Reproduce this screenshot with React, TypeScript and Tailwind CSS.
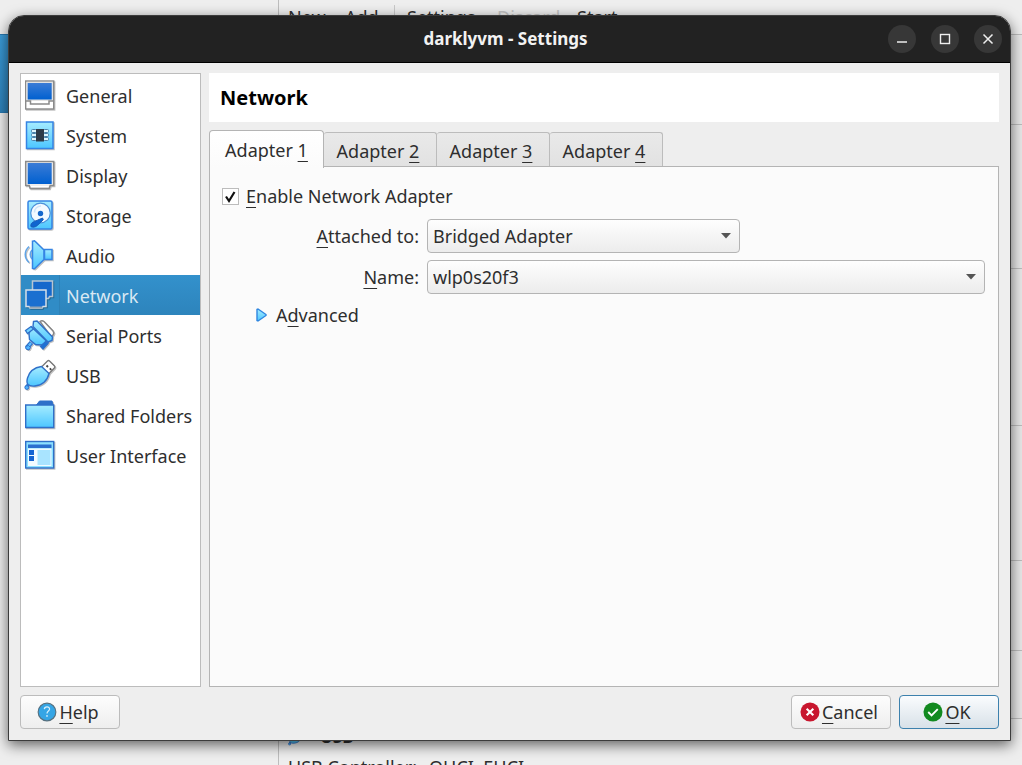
import { useState } from "react";
import type { ReactNode } from "react";

const OUT = "#2f70c9";

function Defs() {
  return (
    <svg width="0" height="0" className="absolute" aria-hidden="true">
      <defs>
        <linearGradient id="screen" x1="0" y1="0" x2="0" y2="1">
          <stop offset="0" stopColor="#3b7cd6" />
          <stop offset="1" stopColor="#0060d0" />
        </linearGradient>
        <linearGradient id="cyan" x1="0" y1="0" x2="0" y2="1">
          <stop offset="0" stopColor="#a6ecff" />
          <stop offset="1" stopColor="#4cc6ff" />
        </linearGradient>
      </defs>
    </svg>
  );
}

function Icon({ children }: { children: ReactNode }) {
  return (
    <svg
      width="32"
      height="32"
      viewBox="0 0 32 32"
      fill="none"
      className="shrink-0 drop-shadow-[1px_1px_0px_rgba(0,0,0,0.25)]"
      aria-hidden="true"
    >
      {children}
    </svg>
  );
}

const icons: Record<string, ReactNode> = {
  General: (
    <>
      <rect x="1.700" y="2" width="28" height="28" fill="#fff" stroke="#8a8a8a" strokeWidth="1.400" />
      <rect x="2.500" y="3" width="26.500" height="19" fill="#e2e2e2" />
      <rect x="3.700" y="4" width="24" height="16.500" fill="url(#screen)" />
      <path d="M2 22h4.500v3h18.500v-3h4.500" stroke="#8a8a8a" strokeWidth="1.500" />
    </>
  ),
  System: (
    <>
      <rect x="2.500" y="3" width="26.500" height="26.500" fill="url(#cyan)" stroke="#3584e4" strokeWidth="1.500" />
      {[10.5, 14.5, 18.5].map((y) => (
        <g key={y} fill="#dff6ff" stroke="#4b80a8" strokeWidth="1">
          <rect x="7.500" y={y} width="5" height="3" rx="1" />
          <rect x="19.500" y={y} width="5" height="3" rx="1" />
        </g>
      ))}
      <rect x="12" y="10" width="8" height="12.500" fill="#2e3a48" />
    </>
  ),
  Display: (
    <>
      <path d="M1.700 2.500h28v24h-3.500l-1 3H6.200l-1-3H1.700z" fill="#eee" stroke="#8a8a8a" strokeWidth="1.500" />
      <rect x="3.700" y="4" width="24" height="21" fill="url(#screen)" />
      <path d="M7 27.500h17.500" stroke="#fff" />
    </>
  ),
  Storage: (
    <>
      <rect x="4" y="2" width="24" height="28" rx="1.500" fill="url(#cyan)" stroke="#3584e4" strokeWidth="1.500" />
      <circle cx="16.500" cy="14" r="9.800" fill="#f4faff" stroke="#4a8fd8" strokeWidth="1.200" />
      <path d="M10.500 13.500c0-4 3-6.500 6.500-6.500" stroke="#cfe4f8" strokeWidth="1.500" />
      <circle cx="16.500" cy="14.500" r="2.700" fill="#1668cc" />
      <path d="M18.500 19l.8 1.800-6 5.700c-2 1.800-4.500 2-6.300 1.200-.7-2 .5-4.500 3.500-5.200z" fill="#0f66d0" stroke="#1a5cb8" />
    </>
  ),
  Audio: (
    <>
      <path d="M5 7.500C0 12 0 19 5 23.500M8 11Q4.500 15.500 8 20" stroke="#5fa4e8" strokeWidth="1.500" />
      <path d="M8.500 2.200l2-.4L20 11v9.500l-9.500 9.300-2-.4z" fill="url(#cyan)" stroke="#3584e4" strokeWidth="1.500" />
      <path d="M20.500 10.500H28v10h-7.500z" fill="url(#cyan)" stroke="#3584e4" strokeWidth="1.500" />
    </>
  ),
  Network: (
    <>
      <path d="M8.500 2h20v15.500h-3l-1 2h-12l-1-2h-3z" fill="#1668cc" stroke="#b7c5d3" strokeWidth="1.500" />
      <path d="M2 11h20v16.500h-3l-1 1.500H6l-1-1.500H2z" fill="#1a6fd0" stroke="#d6dfe8" strokeWidth="1.500" />
      <path d="M5.500 28.500h13" stroke="#93a4b4" strokeWidth="2" />
    </>
  ),
  "Serial Ports": (
    <>
      <path d="M16 2.500q2-1.500 4 0l9 9.500q1.500 2 0 4l-2 1.500z" fill="#fff" stroke="#858585" strokeWidth="1.400" />
      <path d="M7.500 23.500l-4.500 5" stroke={OUT} strokeWidth="4.500" />
      <path d="M7 24l-3 3.500" stroke="#5cc0ff" strokeWidth="2" />
      <path d="M1.500 27.500l3-1 2 2-1.500 2.500-3-1z" fill="#4fb4ff" stroke={OUT} />
      <path d="M7.500 8L5 14.500l.5 6 6 5 6 .5 6.500-2.500z" fill="url(#cyan)" stroke={OUT} strokeWidth="1.400" />
      <path d="M9.500 2.500L13 2l15.500 16-.5 3.500-4 1.500L9 7.500z" fill="url(#cyan)" stroke={OUT} strokeWidth="1.400" />
      <path d="M1.500 11.500l5.500-4 2.500 2.500-6 4.500z" fill="#74d2ff" stroke={OUT} strokeWidth="1.300" />
      <path d="M21.500 22.500l2.500 2-5 5.500-2.500-2.500z" fill="#1a72d8" stroke={OUT} strokeWidth="1.300" />
    </>
  ),
  USB: (
    <>
      <path d="M17.500 8l6-6q1-1 2 0l5 5q.7 1-.2 2l-5.800 6z" fill="#fff" stroke="#777" strokeWidth="1.300" />
      <path d="M22.500 6.500L24 8M25.800 9.300l1.500 1.500" stroke="#444" strokeWidth="1.800" />
      <path d="M4.500 25.500l-2.500 3" stroke={OUT} strokeWidth="3.500" />
      <path d="M17.500 7.500l7.500 7c-1.500 7-7 12-14 12.500-3 .3-5.500 0-7-1.500-1.300-1.500-1.200-4-.5-6.500C5.500 12 10.500 8.500 17.500 7.500z" fill="url(#cyan)" stroke={OUT} strokeWidth="1.400" />
      <circle cx="2.800" cy="28.500" r="1.900" fill="#4fb4ff" stroke={OUT} />
    </>
  ),
  "Shared Folders": (
    <>
      <path d="M12.500 6l3-4H28l1 4z" fill="#2f70c9" stroke={OUT} />
      <path d="M1.700 6h28v22.500h-28z" fill="url(#cyan)" stroke={OUT} strokeWidth="1.400" />
    </>
  ),
  "User Interface": (
    <>
      <rect x="1.700" y="2.500" width="28" height="26.500" fill="#8be0ff" stroke={OUT} strokeWidth="1.400" />
      <rect x="4" y="9.500" width="23.500" height="17.500" fill="#f2fbff" />
      <rect x="4" y="5.500" width="23.500" height="3.500" fill="#2a6fcf" />
      <rect x="5" y="11" width="5" height="5" fill="#1464d2" />
      <rect x="5" y="17" width="5" height="5" fill="#1464d2" />
      <rect x="13.500" y="11" width="13" height="15" fill="#a9e4ff" />
    </>
  ),
};

const tabs = ["1", "2", "3", "4"];

function Key({ children }: { children: ReactNode }) {
  return <span className="underline decoration-1 underline-offset-4">{children}</span>;
}

function Combo({ id, value, className }: { id: string; value: string; className: string }) {
  return (
    <div className={`relative ${className}`}>
      <select
        id={id}
        className="h-[34px] w-full appearance-none rounded-[4px] border border-[#b4b4b4] bg-linear-to-b from-[#fefefe] to-[#ececec] pr-8 pl-[5px]"
      >
        <option>{value}</option>
      </select>
      <svg width="10" height="6" viewBox="0 0 10 6" className="pointer-events-none absolute top-[14px] right-[9px]" aria-hidden="true">
        <path d="M0 0h10L5 5.500z" fill="#555" />
      </svg>
    </div>
  );
}

const buttonBase = "flex h-[34px] w-[100px] items-center justify-center gap-[2px] rounded-[4px] border bg-linear-to-b";

function Backdrop() {
  return (
    <div className="absolute inset-0 flex overflow-hidden bg-[#eeeeee]" aria-hidden="true">
      <div className="w-[278px] shrink-0 pt-[34px]">
        <div className="h-[79px] border-y border-[#2878b0] bg-linear-to-b from-[#3b9bd8] to-[#2d81b9]" />
      </div>
      <div className="flex grow flex-col border-l border-[#bdbdbd]">
        <div className="flex h-[35px] shrink-0 items-start border-b border-[#bdbdbd] pt-[5px] pl-[9px]">
          <span className="w-[57px]">New</span>
          <span className="w-[50px] border-r border-[#c8c8c8]">Add</span>
          <span className="w-[102px] pl-[12px]">Settings</span>
          <span className="w-[80px] text-[#c4c4c4]">Discard</span>
          <span>Start</span>
        </div>
        <div className="h-[90px] shrink-0 border-b border-[#bdbdbd] bg-[#e8e8e8]" />
        <div className="h-[144px] shrink-0 border-b border-[#bdbdbd] bg-[#e8e8e8]" />
        <div className="h-[157px] shrink-0 border-b border-[#bdbdbd] bg-[#e8e8e8]" />
        <div className="h-[135px] shrink-0 border-b border-[#bdbdbd] bg-[#e8e8e8]" />
        <div className="h-[90px] shrink-0 border-b border-[#bdbdbd] bg-[#e8e8e8]" />
        <div className="h-[68px] shrink-0 border-b border-[#bdbdbd] bg-[#e8e8e8]" />
        <div className="flex flex-col pt-[4px] pl-[9px] leading-[28px]">
          <div className="flex items-center gap-[14px] text-[17px] font-bold">
            <svg width="18" height="18" viewBox="0 0 32 32" aria-hidden="true">
              {icons.USB}
            </svg>
            <span>USB</span>
          </div>
          <div className="flex gap-[12px] pt-[2px]">
            <span>USB Controller:</span>
            <span>OHCI, EHCI</span>
          </div>
        </div>
      </div>
    </div>
  );
}

export default function App() {
  const [page, setPage] = useState("Network");
  const [tab, setTab] = useState("1");
  const [enabled, setEnabled] = useState(true);

  return (
    <div className="relative flex min-h-screen bg-[#eeeeee] pt-[15px] pr-[11px] pb-[24px] pl-[8px] font-['Noto_Sans',sans-serif] text-[18px] leading-[24px] text-[#2e2e2e]">
      <Defs />
      <Backdrop />
      <main className="relative flex grow flex-col rounded-t-[16px] border border-[#3c3c3c] bg-[#eeeeee] shadow-[0_4px_14px_rgba(0,0,0,0.6)]">
        <header className="grid h-[47px] shrink-0 grid-cols-[1fr_auto_1fr] items-center rounded-t-[15px] border-b border-black bg-[#222222] pr-[8px]">
          <h1 className="col-start-2 text-[17px] font-bold text-[#f2f2f2]">darklyvm - Settings</h1>
          <div className="flex justify-end gap-[15px]">
            <button aria-label="Minimize" className="flex size-[28px] items-center justify-center rounded-full bg-[#373737]">
              <svg width="12" height="12" viewBox="0 0 12 12"><path d="M1 9h10" stroke="#eee" strokeWidth="1.500" /></svg>
            </button>
            <button aria-label="Maximize" className="flex size-[28px] items-center justify-center rounded-full bg-[#373737]">
              <svg width="12" height="12" viewBox="0 0 12 12"><rect x="1.500" y="1.500" width="9" height="9" fill="none" stroke="#eee" strokeWidth="1.400" /></svg>
            </button>
            <button aria-label="Close" className="flex size-[28px] items-center justify-center rounded-full bg-[#373737]">
              <svg width="12" height="12" viewBox="0 0 12 12"><path d="M1.500 1.500l9 9M10.500 1.500l-9 9" stroke="#eee" strokeWidth="1.500" /></svg>
            </button>
          </div>
        </header>

        <div className="flex grow gap-[8px] px-[11px] pt-[10px]">
          <nav className="w-[181px] shrink-0 border border-[#bcbcbc] bg-white pt-[1px]">
            <ul>
              {Object.keys(icons).map((name) => (
                <li key={name}>
                  <button
                    onClick={() => setPage(name)}
                    className={
                      name === page
                        ? "flex h-[40px] w-full items-center bg-[#308cc6] pl-[3px] text-left whitespace-nowrap text-[#d9e8f3]"
                        : "flex h-[40px] w-full items-center pl-[3px] text-left whitespace-nowrap"
                    }
                  >
                    <Icon>{icons[name]}</Icon>
                    <span
                      className={
                        name === page
                          ? "ml-[3px] flex h-full grow items-center border-l border-[#2d82b8] bg-linear-to-b from-[#3391cc] to-[#2d84bc] pt-[2px] pl-[6px]"
                          : "ml-[4px] pt-[2px] pl-[6px]"
                      }
                    >
                      {name}
                    </span>
                  </button>
                </li>
              ))}
            </ul>
          </nav>

          <section className="flex min-w-0 grow flex-col">
            <h2 className="flex h-[49px] shrink-0 items-center bg-white px-[11px] text-[20px] font-bold text-black">{page}</h2>
            <div role="tablist" className="mt-[8px] flex h-[36px] shrink-0 items-end">
              {tabs.map((n) => (
                <button
                  key={n}
                  role="tab"
                  aria-selected={n === tab}
                  onClick={() => setTab(n)}
                  className={
                    n === tab
                      ? "relative z-10 -mb-[2px] h-[38px] w-[115px] rounded-t-[4px] border border-b-0 border-[#b4b4b4] bg-linear-to-b from-white to-[#fbfbfb]"
                      : "h-[34px] w-[113px] rounded-t-[3px] border border-b-0 border-l-0 border-[#bcbcbc] bg-linear-to-b from-[#e9e9e9] to-[#e2e2e2] pt-[2px] pr-[4px]"
                  }
                >
                  Adapter <Key>{n}</Key>
                </button>
              ))}
            </div>
            <div role="tabpanel" className="flex grow flex-col border border-[#b4b4b4] bg-[#fbfbfb] pt-[17px] pr-[13px] pl-[12px]">
              <label className="flex items-center gap-[7px]">
                <span className="relative flex size-[17px]">
                  <input
                    type="checkbox"
                    checked={enabled}
                    onChange={(e) => setEnabled(e.target.checked)}
                    className="size-[17px] appearance-none border border-[#bcbcbc] bg-white"
                  />
                  {enabled && (
                    <svg width="17" height="17" viewBox="0 0 17 17" className="pointer-events-none absolute inset-0" aria-hidden="true">
                      <path d="M4 8.500l3 4.500L12.500 4" fill="none" stroke="#111" strokeWidth="2.200" />
                    </svg>
                  )}
                </span>
                <span><Key>E</Key>nable Network Adapter</span>
              </label>
              <div className="mt-[11px] grid grid-cols-[197px_1fr] items-center gap-x-[8px] gap-y-[7px]">
                <label htmlFor="attached" className="text-right"><Key>A</Key>ttached to:</label>
                <Combo id="attached" value="Bridged Adapter" className="w-[313px]" />
                <label htmlFor="name" className="text-right"><Key>N</Key>ame:</label>
                <Combo id="name" value="wlp0s20f3" className="w-full" />
              </div>
              <button className="mt-[9px] ml-[33px] flex items-center gap-[8px] self-start">
                <svg width="13" height="14" viewBox="0 0 13 14" aria-hidden="true">
                  <path d="M2 1.500l1-.5 8 5.500v1L3 13l-1-.5z" fill="url(#cyan)" stroke="#2f86e0" strokeWidth="1.400" />
                </svg>
                <span>A<Key>d</Key>vanced</span>
              </button>
            </div>
          </section>
        </div>

        <footer className="flex shrink-0 gap-[8px] px-[11px] pt-[8px] pb-[11px]">
          <button className={`${buttonBase} mr-auto border-[#bcbcbc] from-[#fdfdfd] to-[#eeeeee] pr-[4px]`}>
            <svg width="20" height="20" viewBox="0 0 21 21" aria-hidden="true">
              <circle cx="10.500" cy="10.500" r="9.300" fill="#35a5e5" stroke="#56707f" strokeWidth="1.200" />
              <path d="M7.700 7.500c.3-3.200 5.700-3 5.500.2-.1 1.800-2.700 2-2.700 4.300" fill="none" stroke="#d8f0fc" strokeWidth="1.300" />
              <circle cx="10.500" cy="14.600" r=".9" fill="#d8f0fc" />
            </svg>
            <span><Key>H</Key>elp</span>
          </button>
          <button className={`${buttonBase} border-[#bcbcbc] from-[#fdfdfd] to-[#eeeeee] pr-[4px]`}>
            <svg width="20" height="20" viewBox="0 0 21 21" aria-hidden="true">
              <circle cx="10.500" cy="10.500" r="10" fill="#c8162e" />
              <path d="M7 7l7 7M14 7l-7 7" stroke="#fff" strokeWidth="2.200" />
            </svg>
            <span><Key>C</Key>ancel</span>
          </button>
          <button className={`${buttonBase} border-[#3d81ad] from-[#fafcfe] to-[#d8e1e8] pr-[4px]`}>
            <svg width="20" height="20" viewBox="0 0 21 21" aria-hidden="true">
              <circle cx="10.500" cy="10.500" r="10" fill="#128a20" />
              <path d="M5.500 10.500l3.500 3.500 6.500-6.500" fill="none" stroke="#fff" strokeWidth="2" />
            </svg>
            <span><Key>O</Key>K</span>
          </button>
        </footer>
      </main>
    </div>
  );
}
